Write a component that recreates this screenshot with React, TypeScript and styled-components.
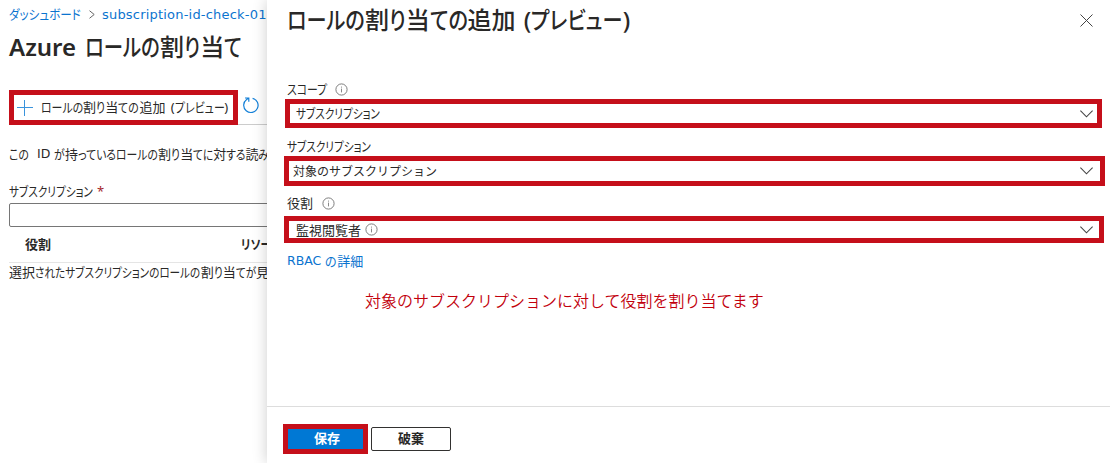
import React, { useLayoutEffect, useRef, useState } from 'react';
import styled, { createGlobalStyle } from 'styled-components';

const GlobalStyle = createGlobalStyle`
    * {
        box-sizing: border-box;
    }
    body {
        margin: 0;
        background: #fff;
        color: #292827;
        font-family: 'Noto Sans', 'Noto Sans CJK JP', sans-serif;
        font-size: 13px;
        overflow: hidden;
    }
`;

const Screen = styled.div`
    display: flex;
    width: 1110px;
    height: 463px;
    overflow: hidden;
`;

const Page = styled.main`
    width: 267px;
    padding-left: 9px;
    display: flex;
    flex-direction: column;
    overflow: hidden;
    flex-shrink: 0;
`;

const Panel = styled.aside`
    position: relative;
    flex: 1;
    display: flex;
    flex-direction: column;
    background: #fff;
    box-shadow: 0 0 14px rgba(0, 0, 0, 0.2);
`;

const Line = styled.div<{ $height: number; $gap?: number; $indent?: number }>`
    display: flex;
    align-items: center;
    flex-shrink: 0;
    height: ${({ $height }) => $height}px;
    margin-top: ${({ $gap = 0 }) => $gap}px;
    padding-left: ${({ $indent = 0 }) => $indent}px;
    line-height: 1;
    white-space: nowrap;
    > * {
        flex-shrink: 0;
    }
`;

const Latin = styled.span`
    font-family: 'DejaVu Sans', sans-serif;
    font-size: 12.5px;
    white-space: pre;
`;

const Breadcrumb = styled(Line)`
    color: #0b74cf;
    svg {
        margin: 1px 7px 0 8px;
    }
    ${Latin} {
        font-size: 13px;
        letter-spacing: 0.2px;
    }
`;

const Title = styled(Line)`
    font-size: 24px;
    font-weight: 500;
    word-spacing: 2px;
`;

const ProductName = styled.span`
    width: 76px;
    font-weight: 600;
`;

const Toolbar = styled.div`
    display: flex;
    height: 35px;
    margin-top: 25px;
    flex-shrink: 0;
    border-bottom: 1px solid #ccc;
    svg {
        flex-shrink: 0;
    }
`;

const Highlight = styled.div<{ $width: number; $height: number }>`
    display: flex;
    align-items: center;
    flex-shrink: 0;
    width: ${({ $width }) => $width}px;
    height: ${({ $height }) => $height}px;
    border: 5px solid #c50f1a;
    background: #fff;
    line-height: 1;
    white-space: nowrap;
`;

const AddButton = styled(Highlight)`
    padding-left: 3px;
    gap: 8px;
    word-spacing: 2px;
`;

const RefreshIcon = styled.svg`
    margin: 7px 0 0 5px;
`;

const Required = styled.span`
    margin-left: 4px;
    color: #a4262c;
    font-size: 13px;
`;

const TextInput = styled.div`
    height: 24px;
    margin: 2px -10px 0 0;
    flex-shrink: 0;
    border: 1px solid #767676;
    border-radius: 2px;
`;

const TableHead = styled.div`
    display: grid;
    grid-template-columns: 216px 80px;
    align-items: center;
    height: 36px;
    flex-shrink: 0;
    padding: 0 0 1px 16px;
    border-bottom: 1px solid #e5e5e5;
    font-weight: 700;
    line-height: 1;
    white-space: nowrap;
`;

const PanelHead = styled.header`
    display: flex;
    justify-content: space-between;
    align-items: center;
    height: 40px;
    padding: 0 17px 0 20px;
`;

const Select = styled(Highlight)<{ $left: number; $gap: number; $pad: number; $arrow: number }>`
    margin: ${({ $gap }) => $gap}px 0 0 ${({ $left }) => $left}px;
    padding: 0 ${({ $arrow }) => $arrow}px 0 ${({ $pad }) => $pad}px;
    > svg:last-child {
        margin-left: auto;
    }
`;

const SiteText = styled.span<{ $size: number }>`
    font-size: ${({ $size }) => $size}px;
    font-family: 'Noto Sans CJK JP', sans-serif;
    padding: 0 4px 1px 0;
`;

const Note = styled(Line)`
    color: #c2000c;
    font-size: 16px;
    font-weight: 350;
    font-family: 'Noto Sans CJK JP', sans-serif;
`;

const Link = styled(Line)`
    color: #0b74cf;
`;

const Footer = styled.footer`
    display: flex;
    align-items: flex-start;
    gap: 3px;
    height: 57px;
    margin-top: auto;
    padding: 17px 0 0 16px;
    border-top: 1px solid #ddd;
`;

const SaveButton = styled(Highlight)`
    justify-content: center;
    background: #0078d4;
    color: #fff;
    font-weight: 700;
    padding: 0 0 2px 3px;
`;

const DiscardButton = styled.div`
    display: flex;
    justify-content: center;
    align-items: center;
    width: 80px;
    height: 24px;
    margin-top: 3px;
    padding-bottom: 2px;
    border: 1px solid #323130;
    border-radius: 2px;
    font-weight: 700;
    line-height: 1;
`;

const UiRoot = styled.span`
    display: inline-block;
    white-space: pre;
`;

const Run = styled.span`
    display: inline-block;
`;

const Kana = styled.span`
    display: inline-block;
    transform-origin: 0 50%;
    font-feature-settings: 'palt';
`;

const KANA = /([ぁ-ゖァ-ヺー]+)/;

// UI text with narrow kana: kanji and latin keep their width, the kana fill what is left
function UiText({ text, width }: { text: string; width: number }) {
    const ref = useRef<HTMLSpanElement>(null);
    const [runs, setRuns] = useState<{ scale: number; widths: number[] } | null>(null);
    const parts = text.split(KANA);

    useLayoutEffect(() => {
        const widths = Array.from(ref.current!.children).map(
            (el) => (el.firstElementChild as HTMLElement).offsetWidth,
        );
        const sum = (odd: number) =>
            widths.reduce((total, w, i) => (i % 2 === odd ? total + w : total), 0);
        const kana = sum(1);
        setRuns({ scale: kana ? (width - sum(0)) / kana : 1, widths });
    }, [text, width]);

    return (
        <UiRoot ref={ref}>
            {parts.map((part, i) => {
                if (i % 2 === 0) {
                    return (
                        <Run key={i}>
                            <Run>{part}</Run>
                        </Run>
                    );
                }
                return (
                    <Run key={i} style={runs ? { width: runs.widths[i] * runs.scale } : undefined}>
                        <Kana style={runs ? { transform: `scaleX(${runs.scale})` } : undefined}>
                            {part}
                        </Kana>
                    </Run>
                );
            })}
        </UiRoot>
    );
}

const InfoIcon = ({ gap = 0 }: { gap?: number }) => (
    <svg width={13 + gap} height="13" viewBox={`${-gap} 0 ${13 + gap} 13`} fill="none">
        <circle cx="6.5" cy="6.5" r="5.6" stroke="#707070" strokeWidth="0.9" />
        <path d="M6.5 5.6V9.4M6.5 3.6V4.6" stroke="#888" strokeWidth="1" />
    </svg>
);

const Chevron = () => (
    <svg width="13" height="8" viewBox="0 0 13 8" fill="none">
        <path d="M0.4 0.7L6.5 6.8L12.6 0.7" stroke="#444" strokeWidth="1.1" />
    </svg>
);

function App() {
    return (
        <Screen>
            <GlobalStyle />
            <Page>
                <Breadcrumb $height={28}>
                    <UiText text="ダッシュボード" width={72} />
                    <svg width="6" height="9" viewBox="0 0 6 9" fill="none">
                        <path d="M0.5 0.7L5.2 4.5L0.5 8.3" stroke="#666" />
                    </svg>
                    <Latin>subscription-id-check-01</Latin>
                </Breadcrumb>
                <Title $height={37}>
                    <ProductName>Azure</ProductName>
                    <UiText text="ロールの割り当て" width={157} />
                </Title>
                <Toolbar>
                    <AddButton $width={229} $height={35}>
                        <svg width="16" height="16" viewBox="0 0 16 16">
                            <path d="M0 7.5H16M7.5 0V16" stroke="#3a93dc" />
                        </svg>
                        <UiText text="ロールの割り当ての追加 (プレビュー)" width={187} />
                    </AddButton>
                    <RefreshIcon width="16" height="17" viewBox="0 0 16 17" fill="none">
                        <path
                            d="M9.6 1.3A7.2 7.2 0 1 1 3.6 2.5L5.8 1M2 1H5.8V4.8"
                            stroke="#1480d8"
                            strokeWidth="1.2"
                        />
                    </RefreshIcon>
                </Toolbar>
                <Line $height={20} $gap={19}>
                    <UiText text="この" width={20} />
                    <Latin>{'  ID '}</Latin>
                    <UiText text="が持っているロールの割り当てに対する読み" width={215} />
                </Line>
                <Line $height={20} $gap={17}>
                    <UiText text="サブスクリプション" width={84} />
                    <Required>*</Required>
                </Line>
                <TextInput />
                <TableHead>
                    <UiText text="役割" width={26} />
                    <UiText text="リソース" width={40} />
                </TableHead>
                <Line $height={18}>
                    <UiText text="選択されたサブスクリプションのロールの割り当てが見" width={260} />
                </Line>
            </Page>
            <Panel>
                <PanelHead>
                    <Title $height={40}>
                        <UiText text="ロールの割り当ての追加 (プレビュー)" width={344} />
                    </Title>
                    <svg width="13" height="13" viewBox="0 0 13 13">
                        <path d="M0.5 0.5L12.5 12.5M12.5 0.5L0.5 12.5" stroke="#444" />
                    </svg>
                </PanelHead>
                <Line $height={20} $gap={39} $indent={20}>
                    <UiText text="スコープ" width={40} />
                    <InfoIcon gap={8} />
                </Line>
                <Select $width={817} $height={29} $left={18} $gap={0} $pad={6} $arrow={4}>
                    <UiText text="サブスクリプション" width={84} />
                    <Chevron />
                </Select>
                <Line $height={20} $gap={8} $indent={20}>
                    <UiText text="サブスクリプション" width={84} />
                </Line>
                <Select $width={821} $height={30} $left={17} $gap={0} $pad={4} $arrow={7}>
                    <SiteText $size={12}>対象のサブスクリプション</SiteText>
                    <Chevron />
                </Select>
                <Line $height={20} $gap={7} $indent={20}>
                    <UiText text="役割" width={26} />
                    <InfoIcon gap={9} />
                </Line>
                <Select $width={820} $height={27} $left={17} $gap={3} $pad={7} $arrow={6}>
                    <SiteText $size={13}>監視閲覧者</SiteText>
                    <InfoIcon />
                    <Chevron />
                </Select>
                <Link $height={20} $gap={8} $indent={20}>
                    <Latin>{'RBAC '}</Latin>
                    <UiText text="の詳細" width={38} />
                </Link>
                <Note $height={24} $gap={17} $indent={98}>
                    対象のサブスクリプションに対して役割を割り当てます
                </Note>
                <Footer>
                    <SaveButton $width={85} $height={30}>
                        保存
                    </SaveButton>
                    <DiscardButton>破棄</DiscardButton>
                </Footer>
            </Panel>
        </Screen>
    );
}

export default App;
